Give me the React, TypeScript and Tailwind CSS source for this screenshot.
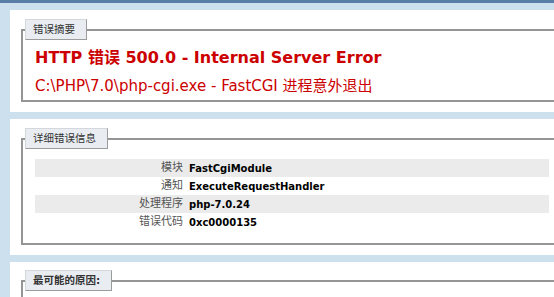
import React from "react";

const latin = "font-['DejaVu_Sans','Noto_Sans_CJK_SC',sans-serif]";

function Legend({ children, bold }: { children: React.ReactNode; bold?: boolean }) {
  return (
    <legend
      className={`ml-[-10px] bg-[#e9edf1] border border-[#d4d8dc] border-r-[#9c9c9c] border-b-[#9c9c9c] pl-[7px] pr-[11px] text-[10.5px] leading-[19px] text-[#333] ${bold ? "font-bold" : ""}`}
    >
      {children}
    </legend>
  );
}

const rows: [string, string][] = [
  ["模块", "FastCgiModule"],
  ["通知", "ExecuteRequestHandler"],
  ["处理程序", "php-7.0.24"],
  ["错误代码", "0xc0000135"],
];

export default function App() {
  return (
    <div className={`w-[554px] h-[297px] overflow-hidden bg-[#cde0ee] ${latin}`}>
      <div className="h-[3px] bg-[#5a7fa6]" />
      <div className="pl-[10px] pt-[7px] w-[600px]">
        <div className="bg-white w-[564px] pt-[9px] pb-[10px] pl-[11px] pr-[11px]">
          <fieldset className="border-2 border-[#959595] px-[12px] pb-[4px]">
            <Legend>错误摘要</Legend>
            <div className="mt-[8px] text-[16px] leading-[20px] font-bold text-[#cc0000] whitespace-nowrap">
              HTTP 错误 500.0 - Internal Server Error
            </div>
            <div className="mt-[8px] text-[15px] leading-[20px] text-[#cc0000] whitespace-nowrap">
              C:\PHP\7.0\php-cgi.exe - FastCGI 进程意外退出
            </div>
          </fieldset>
        </div>

        <div className="bg-white w-[564px] mt-[7px] pt-[9px] pb-[10px] pl-[11px] pr-[11px]">
          <fieldset className="border-2 border-[#959595] px-[12px] pb-[12px]">
            <Legend>详细错误信息</Legend>
            <div className="mt-[10px] flex flex-col">
              {rows.map(([k, v], i) => (
                <div
                  key={k}
                  className={`flex h-[18px] items-center ${i % 2 === 0 ? "bg-[#ebebeb]" : "bg-white"}`}
                >
                  <div className="w-[148px] text-right text-[11px] text-[#555]">{k}</div>
                  <div className="pl-[6px] text-[10px] font-bold text-black whitespace-nowrap">{v}</div>
                </div>
              ))}
            </div>
          </fieldset>
        </div>

        <div className="bg-white w-[564px] mt-[7px] pt-[8px] pb-[10px] pl-[11px] pr-[11px] h-[60px]">
          <fieldset className="border-2 border-b-0 border-[#959595] px-[12px] h-[60px]">
            <Legend bold>最可能的原因:</Legend>
          </fieldset>
        </div>
      </div>
    </div>
  );
}
